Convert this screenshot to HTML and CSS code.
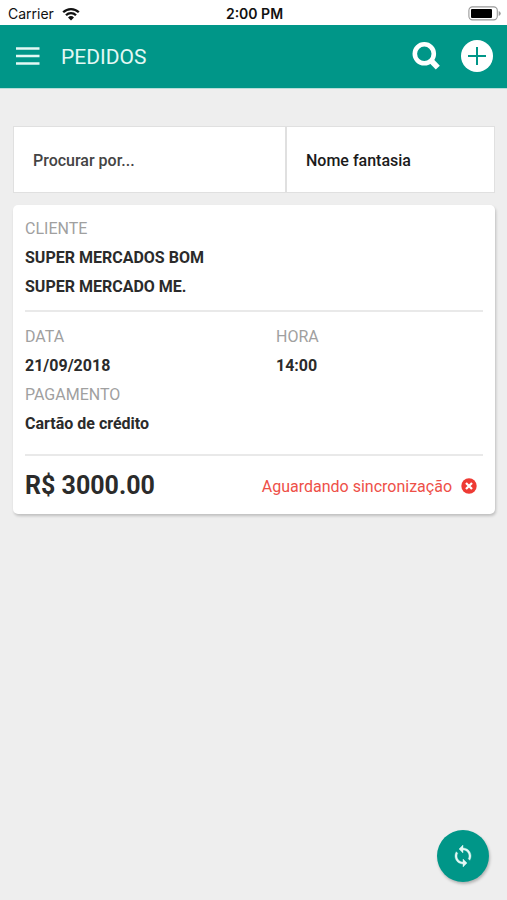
FILE: index.html
```html
<!DOCTYPE html>
<html lang="pt-BR">
<head>
<meta charset="utf-8">
<meta name="viewport" content="width=device-width, initial-scale=1">
<title>Pedidos</title>
<link rel="stylesheet" href="styles.css">
</head>
<body>
<div class="status-bar">
  <span class="carrier">Carrier
    <svg class="wifi" width="18" height="14" viewBox="0 0 18 14" aria-hidden="true" fill="none" stroke="#111" stroke-width="2.3"><path d="M1.2 5.3a11 11 0 0 1 15.6 0M4 8.3a7 7 0 0 1 10 0"/><path d="M6 10.4a4.3 4.3 0 0 1 6 0l-3 3.1z" fill="#111" stroke="none"/></svg>
  </span>
  <span class="clock">2:00 PM</span>
  <svg class="battery" width="33" height="15" viewBox="0 0 33 15" aria-hidden="true"><rect x=".9" y=".9" width="28.4" height="13" rx="3.6" fill="#fff" stroke="#999" stroke-width="1.1"/><rect x="3" y="3" width="21" height="9" rx="1" fill="#000"/><path d="M30.7 5v5q2-.8 2-2.5T30.7 5z" fill="#999"/></svg>
</div>
<header class="app-bar">
  <button class="icon-button" type="button" aria-label="Menu"><svg width="24" height="18" viewBox="0 0 24 18"><path d="M0 1.5h23.5M0 9h23.5M0 16.5h23.5" stroke="#e3f8f4" stroke-width="2.3"/></svg></button>
  <h1 class="title">PEDIDOS</h1>
  <button class="icon-button" type="button" aria-label="Buscar"><svg width="28" height="28" viewBox="0 0 28 28" fill="none" stroke="#fff"><circle cx="12.3" cy="11.8" r="9.5" stroke-width="4.6"/><path d="M18.5 18l7.3 7.6" stroke-width="5.6"/></svg></button>
  <button class="icon-button" type="button" aria-label="Adicionar"><svg width="32" height="32" viewBox="0 0 32 32"><circle cx="16" cy="16" r="16" fill="#fff"/><path d="M16 7v18M7 16h18" stroke="#009688" stroke-width="2"/></svg></button>
</header>
<main class="content">
  <form class="filters">
    <input class="search" type="text" placeholder="Procurar por..." aria-label="Procurar por">
    <select class="field" aria-label="Campo de busca"><option>Nome fantasia</option></select>
  </form>
  <article class="card">
    <section class="client">
      <p class="label">CLIENTE</p>
      <p class="value">SUPER MERCADOS BOM</p>
      <p class="value">SUPER MERCADO ME.</p>
    </section>
    <section class="details">
      <div>
        <p class="label">DATA</p>
        <p class="value">21/09/2018</p>
        <p class="label">PAGAMENTO</p>
        <p class="value">Cartão de crédito</p>
      </div>
      <div>
        <p class="label">HORA</p>
        <p class="value">14:00</p>
      </div>
    </section>
    <footer class="summary">
      <strong class="total">R$ 3000.00</strong>
      <span class="sync-state">Aguardando sincronização
        <svg width="16" height="16" viewBox="0 0 16 16" aria-hidden="true"><circle cx="8" cy="8" r="7.7" fill="#ee3b34"/><path d="M5 5l6 6M11 5l-6 6" stroke="#fff" stroke-width="2.3"/></svg>
      </span>
    </footer>
  </article>
</main>
<button class="sync-button" type="button" aria-label="Sincronizar"><svg width="24" height="24" viewBox="0 0 24 24" fill="#e3f8f4" stroke="#e3f8f4" stroke-width=".4"><path d="M12 4V1L8 5l4 4V6c3.310 0 6 2.690 6 6 0 1.010-.25 1.970-.7 2.800l1.460 1.460A7.930 7.930 0 0 0 20 12c0-4.420-3.580-8-8-8zm0 14c-3.310 0-6-2.690-6-6 0-1.010.25-1.970.7-2.800L5.240 7.740A7.930 7.930 0 0 0 4 12c0 4.420 3.580 8 8 8v3l4-4-4-4v3z"/></svg></button>
</body>
</html>
```
FILE: styles.css
```css
* { box-sizing: border-box; }

body {
  margin: 0;
  min-height: 100vh;
  background: #eee;
  color: #2b2b2b;
  font-family: Roboto, sans-serif;
  font-size: 16px;
}

p, h1 { margin: 0; }
svg { display: block; flex: none; }
button { border: 0; padding: 0; cursor: pointer; }

.status-bar {
  display: grid;
  grid-template-columns: 1fr auto 1fr;
  align-items: center;
  height: 25px;
  padding: 2px 6px 0 8px;
  background: #fff;
  color: #111;
  font: 14px/20px Inter, sans-serif;
}
.carrier { display: flex; align-items: center; gap: 8px; }
.clock { font-weight: 600; }
.battery { justify-self: end; }

.app-bar {
  display: flex;
  align-items: center;
  gap: 21px;
  height: 64px;
  padding: 0 14px 2px 16px;
  background: #009688;
  border-bottom: 1px solid #b5ddd8;
}
.icon-button { background: none; }
.title {
  flex: 1;
  padding-top: 2px;
  color: #e3f8f4;
  font-size: 21px;
  font-weight: 400;
}

.content { padding: 37px 12px 0 13px; }

.filters {
  display: grid;
  grid-template-columns: 273fr 209fr;
  margin-bottom: 12px;
}
.search, .field {
  width: 100%;
  height: 67px;
  padding: 2px 19px 0;
  border: 1px solid #e0e0e0;
  border-radius: 0;
  background: #fff;
  color: #1b1b1b;
  font: 500 16px/24px Roboto, sans-serif;
  appearance: none;
}
.search::placeholder { color: #444; opacity: 1; }

.card {
  padding: 9px 12px 0;
  border-radius: 5px;
  background: #fff;
  box-shadow: 1px 2px 3px rgba(0, 0, 0, 0.2);
}
.label, .value { line-height: 29px; }
.label { color: #a0a0a0; }
.value { font-weight: 700; }
.client { padding-bottom: 9px; }
.details {
  display: grid;
  grid-template-columns: 251fr 207fr;
  padding: 10px 0 16px;
  border-top: 2px solid #e9e9e9;
}
.summary {
  display: flex;
  align-items: center;
  justify-content: space-between;
  height: 60px;
  padding-right: 6px;
  border-top: 2px solid #e9e9e9;
}
.total { font-size: 25px; }
.sync-state {
  display: flex;
  align-items: center;
  gap: 9px;
  padding-top: 2px;
  color: #ee5048;
}

.sync-button {
  position: fixed;
  right: 18px;
  bottom: 18px;
  display: grid;
  place-items: center;
  width: 52px;
  height: 52px;
  border-radius: 50%;
  background: #009688;
  box-shadow: 1px 2px 3px rgba(0, 0, 0, 0.25);
}
```
